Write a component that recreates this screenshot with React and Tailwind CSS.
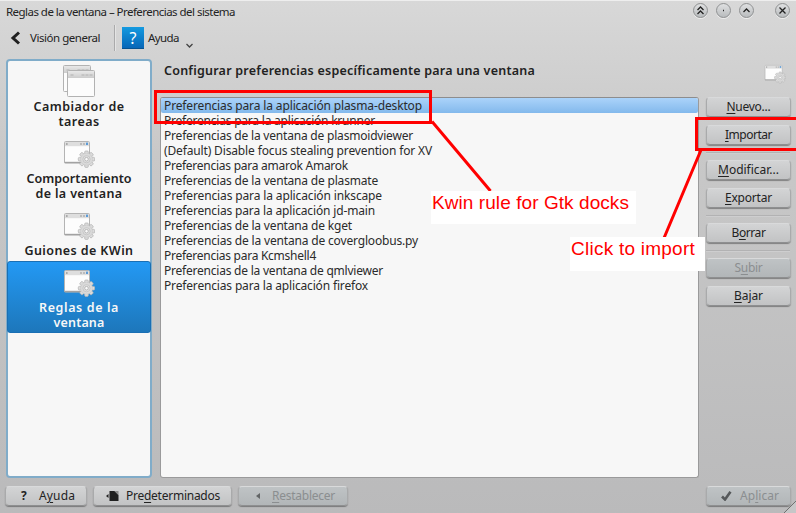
import React, { useLayoutEffect, useRef, useState } from "react";

// Text set to a given advance width by adjusting its tracking.
function Fit({ w, className = "", children }) {
  const ref = useRef(null);
  const [spacing, setSpacing] = useState(0);
  useLayoutEffect(() => {
    const el = ref.current;
    const n = el.textContent.length;
    setSpacing((w - el.getBoundingClientRect().width) / n);
  }, [w]);
  return (
    <span
      ref={ref}
      className={"inline-block whitespace-pre " + className}
      style={{ letterSpacing: spacing + "px" }}
    >
      {children}
    </span>
  );
}

// Label with an underlined mnemonic letter at index k.
function Mnemonic({ text, k, w }) {
  return (
    <Fit w={w}>
      {text.slice(0, k)}
      <span className="underline decoration-1 underline-offset-2">{text[k]}</span>
      {text.slice(k + 1)}
    </Fit>
  );
}

function Button({ className = "", disabled, children }) {
  return (
    <div
      className={
        "flex h-[20px] shrink-0 items-center rounded-[4px] border border-t-[#d9dadb] border-x-[#a9aaab] border-b-[#8e8f90] shadow-[0_1px_1px_rgba(0,0,0,0.35)] bg-linear-to-b " +
        (disabled
          ? "from-[#bfc3c5] to-[#b2b6b8] text-[#8b8e90] "
          : "from-[#d3d4d5] to-[#c2c3c4] text-[#232323] ") +
        className
      }
    >
      {children}
    </div>
  );
}

function Gear({ cx, cy }) {
  return (
    <g transform={`translate(${cx} ${cy})`}>
      {[0, 45, 90, 135].map((a) => (
        <rect key={a} x="-1.8" y="-8.2" width="3.6" height="16.4" rx="1" fill="#dcdcdc" stroke="#b0b0b0" strokeWidth=".7" transform={`rotate(${a})`} />
      ))}
      <circle r="6" fill="#dadada" stroke="#c4c4c4" strokeWidth=".5" />
      <circle r="3.6" fill="#e2e2e2" stroke="#bdbdbd" strokeWidth=".7" />
      <circle r="1.8" fill="#fafafa" stroke="#a2a2a2" strokeWidth=".7" />
    </g>
  );
}

function WindowGear({ className = "" }) {
  return (
    <svg className={className} viewBox="0 0 32 28">
      <rect x="1.5" y="1.5" width="25" height="21.5" rx="1" fill="#fdfdfd" stroke="#b4b4b4" />
      <path d="M1.500 22.500h25" stroke="#a2a2a2" strokeWidth="1.4" />
      <rect x="2" y="2" width="24" height="4.2" fill="#dedede" />
      <rect x="3" y="3" width="1.6" height="2" fill="#aaa" />
      <rect x="17" y="3" width="2" height="2" fill="#bbb" />
      <rect x="20" y="3" width="2" height="2" fill="#bbb" />
      <rect x="23" y="2.6" width="2" height="2.4" fill="#5b9bd8" />
      <Gear cx={23.5} cy={19.2} />
    </svg>
  );
}

function TwoWindows() {
  const win = (x, y, w, h) => (
    <g>
      <rect x={x} y={y} width={w} height={h} rx="1" fill="#fcfcfc" stroke="#b2b2b2" />
      <rect x={x + 0.5} y={y + 0.5} width={w - 1} height="7" fill="url(#bar)" />
      <path d={`M${x + 3} ${y + 4.5}h3M${x + 14} ${y + 4.5}h12`} stroke="#b0b0b0" strokeWidth="1.2" strokeDasharray="3 1" />
    </g>
  );
  return (
    <svg className="h-[33px] w-[34px]" viewBox="0 0 34 33">
      <defs>
        <linearGradient id="bar" x2="0" y2="1">
          <stop offset="0" stopColor="#e8e8e8" />
          <stop offset="1" stopColor="#cccccc" />
        </linearGradient>
      </defs>
      {win(1.5, 0.5, 27, 26)}
      {win(5.5, 5.5, 27, 26)}
    </svg>
  );
}

function Orb({ children }) {
  return (
    <div className="flex size-[15px] items-center justify-center rounded-full border border-[#8f9192] bg-linear-to-b from-[#dfe0e1] to-[#b9bcbe] shadow-[0_1px_0_#eee]">
      <svg className="size-[13px] shrink-0" viewBox="0 0 13 13" fill="none" stroke="#222" strokeWidth="1.3">
        {children}
      </svg>
    </div>
  );
}

function Separator() {
  return <div className="h-[2px] w-[84px] border-t border-b border-t-[#b2b2b3] border-b-[#cececf]" />;
}

const rules = [
  ["Preferencias para la aplicación plasma-desktop", 258],
  ["Preferencias para la aplicación krunner", 211],
  ["Preferencias de la ventana de plasmoidviewer", 249],
  ["(Default) Disable focus stealing prevention for XV", 268],
  ["Preferencias para amarok Amarok", 184],
  ["Preferencias de la ventana de plasmate", 214],
  ["Preferencias para la aplicación inkscape", 218],
  ["Preferencias para la aplicación jd-main", 211],
  ["Preferencias de la ventana de kget", 188],
  ["Preferencias de la ventana de covergloobus.py", 254],
  ["Preferencias para Kcmshell4", 152],
  ["Preferencias de la ventana de qmlviewer", 219],
  ["Preferencias para la aplicación firefox", 204],
];

function Sidebar() {
  const line = "flex h-[15px] items-center leading-[15px]";
  return (
    <div className="flex h-[419px] w-[146px] shrink-0 flex-col items-center rounded-[4px] border-2 border-[#80acc9] bg-[#f7f7f7] text-[12.5px] font-semibold text-[#222]">
      <div className="flex h-[74px] w-full flex-col items-center pt-[4px]">
        <TwoWindows />
        <div className={line + " mt-px"}><Fit w={91}>Cambiador de</Fit></div>
        <div className={line}><Fit w={41}>tareas</Fit></div>
      </div>
      <div className="flex h-[72px] w-full flex-col items-center pt-[5px]">
        <WindowGear className="mb-[3px] h-[28px] w-[32px]" />
        <div className={line}><Fit w={105}>Comportamiento</Fit></div>
        <div className={line}><Fit w={87}>de la ventana</Fit></div>
      </div>
      <div className="flex h-[54px] w-full flex-col items-center pt-[5px]">
        <WindowGear className="mb-[3px] h-[28px] w-[32px]" />
        <div className={line}><Fit w={109}>Guiones de KWin</Fit></div>
      </div>
      <div className="flex h-[72px] w-[144px] shrink-0 flex-col items-center rounded-[3px] border border-[#1a6fb4] bg-linear-to-b from-[#2399f4] to-[#1d77bb] pt-[7px] text-[#f7f7f7]">
        <WindowGear className="mb-[3px] h-[28px] w-[32px] shrink-0" />
        <div className={line}><Fit w={80}>Reglas de la</Fit></div>
        <div className={line}><Fit w={51}>ventana</Fit></div>
      </div>
    </div>
  );
}

function Annotations() {
  return (
    <>
      <svg className="absolute inset-0 h-[513px] w-[796px]" viewBox="0 0 796 513" fill="none" stroke="#ff0000" strokeWidth="3">
        <rect x="155.5" y="91.5" width="275" height="31" />
        <rect x="696.5" y="118.5" width="110" height="31" />
        <path d="M432 121.500L490.500 191M701 150L664 238" />
      </svg>
      <div className="absolute top-[191px] left-[431px] flex h-[33px] w-[205px] bg-white pl-[1px] font-['Liberation_Sans',sans-serif] text-[19px] leading-[23px] text-[#ff0000]">
        <Fit w={197}>Kwin rule for Gtk docks</Fit>
      </div>
      <div className="absolute top-[237px] left-[570px] flex h-[34px] w-[135px] bg-white pl-[1px] font-['Liberation_Sans',sans-serif] text-[19px] leading-[23px] text-[#ff0000]">
        <Fit w={124}>Click to import</Fit>
      </div>
    </>
  );
}

export default function App() {
  return (
    <div className="relative flex h-[513px] w-[796px] flex-col overflow-hidden bg-linear-to-b from-[#d8d8d8] via-[#c8c8c8] via-30% to-[#bababb] font-['Noto_Sans','Open_Sans',sans-serif] text-[12px] text-[#232323]">
      <div className="flex h-[22px] items-center border-t border-[#eeeeee] pr-[6px] pl-[6px]">
        <Fit w={229} className="text-[11.5px] leading-[18px]">Reglas de la ventana – Preferencias del sistema</Fit>
        <div className="mb-[2px] ml-auto flex items-center gap-[8px]">
          <Orb><path d="M3.500 6L6.500 3L9.500 6M3.500 10L6.500 7L9.500 10" /></Orb>
          <Orb><path d="M6 6.500h1" /></Orb>
          <Orb><path d="M3.500 8L6.500 5L9.500 8" /></Orb>
          <div className="ml-[13px]"><Orb><path d="M3.500 3.500L9.500 9.500M9.500 3.500L3.500 9.500" /></Orb></div>
        </div>
      </div>
      <div className="flex h-[37px] items-start pt-[2px]">
        <div className="flex h-[28px] items-center">
          <svg className="ml-[10px] h-[14px] w-[11px]" viewBox="0 0 11 14" fill="none" stroke="#202020" strokeWidth="3">
            <path d="M9 1.500L3 7L9 12.500" />
          </svg>
          <Fit w={70} className="ml-[9px] text-[11.5px]">Visión general</Fit>
          <div className="ml-[14px] h-[26px] w-[2px] border-r border-l border-l-[#aaaaab] border-r-[#e4e4e4]" />
          <div className="ml-[6px] flex size-[22px] items-center justify-center border-b border-[#075391] bg-linear-to-b from-[#159ae0] to-[#0867b8] text-[16px] leading-none text-white">?</div>
          <Fit w={31} className="ml-[4px] text-[11.5px]">Ayuda</Fit>
          <svg className="mt-[15px] ml-[7px] h-[5px] w-[7px]" viewBox="0 0 7 5" fill="none" stroke="#444" strokeWidth="1.3">
            <path d="M.5 1L3.500 4L6.500 1" />
          </svg>
        </div>
      </div>
      <div className="flex h-[419px] pl-[6px]">
        <Sidebar />
        <div className="ml-[8px] flex w-[539px] shrink-0 flex-col">
          <div className="h-[38px] pt-[3px] pl-[4px] text-[12.5px] leading-[18px] font-semibold text-[#222]">
            <Fit w={371}>Configurar preferencias específicamente para una ventana</Fit>
          </div>
          <div className="flex h-[381px] flex-col rounded-[3px] border border-t-[#8d8d8e] border-x-[#9a9a9b] border-b-[#9a9a9b] bg-[#f7f7f7]">
            {rules.map(([text, w], i) => (
              <div
                key={text}
                className={
                  "flex h-[15px] items-center pl-[3px] leading-[15px] text-[#2b2b2b] " +
                  (i === 0 ? "rounded-[2px] bg-linear-to-b from-[#abd3fa] to-[#83b9ec]" : "")
                }
              >
                <Fit w={w}>{text}</Fit>
              </div>
            ))}
          </div>
        </div>
        <div className="ml-[7px] flex w-[85px] flex-col">
          <div className="flex h-[38px] justify-end pt-[5px] pr-[5px]">
            <WindowGear className="h-[20px] w-[22px]" />
          </div>
          <Button className="justify-center"><Mnemonic text="Nuevo..." k={0} w={44} /></Button>
          <Button className="mt-[8px] justify-center"><Mnemonic text="Importar" k={0} w={47} /></Button>
          <div className="flex h-[15px] items-center"><Separator /></div>
          <Button className="justify-center"><Mnemonic text="Modificar..." k={0} w={61} /></Button>
          <Button className="mt-[8px] justify-center"><Mnemonic text="Exportar" k={0} w={47} /></Button>
          <div className="flex h-[15px] items-center"><Separator /></div>
          <Button className="justify-center"><Mnemonic text="Borrar" k={1} w={34} /></Button>
          <div className="flex h-[15px] items-center"><Separator /></div>
          <Button className="justify-center" disabled><Mnemonic text="Subir" k={1} w={28} /></Button>
          <Button className="mt-[8px] justify-center"><Mnemonic text="Bajar" k={0} w={29} /></Button>
        </div>
      </div>
      <div className="flex h-[35px] items-start pt-[8px] pl-[5px]">
        <Button className="w-[82px] pl-[15px]">
          <span className="w-[8px] text-[12px] font-bold">?</span>
          <div className="ml-[10px] flex"><Mnemonic text="Ayuda" k={1} w={36} /></div>
        </Button>
        <Button className="ml-[6px] w-[139px] pl-[12px]">
          <svg className="h-[10px] w-[13px]" viewBox="0 0 13 10" fill="#202020">
            <path d="M0 5L2.500 3V7ZM3.500 0H8.500L12.500 4V10H3.500Z" />
            <path d="M8.500 0H12.500V4Z" fill="#8a8a8a" />
          </svg>
          <div className="ml-[7px] flex"><Mnemonic text="Predeterminados" k={3} w={94} /></div>
        </Button>
        <Button className="ml-[6px] w-[110px] pl-[17px]" disabled>
          <svg className="h-[6px] w-[4px]" viewBox="0 0 4 6" fill="#626566"><path d="M0 3L4 0V6Z" /></svg>
          <div className="ml-[12px] flex"><Mnemonic text="Restablecer" k={0} w={63} /></div>
        </Button>
        <Button className="ml-[358px] w-[85px] pl-[14px]" disabled>
          <svg className="h-[10px] w-[11px]" viewBox="0 0 11 10" fill="none" stroke="#55585a" strokeWidth="2.6">
            <path d="M1 5.500L4 8.500L9.500 .8" />
          </svg>
          <div className="ml-[8px] flex"><Mnemonic text="Aplicar" k={2} w={39} /></div>
        </Button>
      </div>
      <svg className="absolute right-0 bottom-0 size-[12px]" viewBox="0 0 12 12">
        <path d="M12 0V12H0Z" fill="#c6c6c7" />
        <path d="M0 12L12 0" stroke="#707070" />
      </svg>
      <Annotations />
    </div>
  );
}
